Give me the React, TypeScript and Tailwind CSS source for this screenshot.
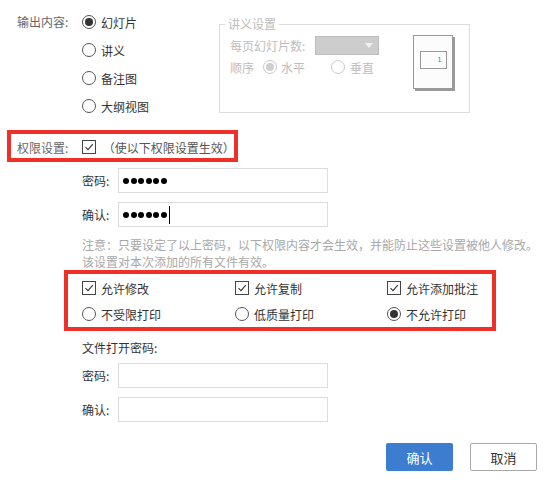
import React from 'react';

function Radio({ checked = false, disabled = false }: { checked?: boolean; disabled?: boolean }) {
  return (
    <span
      className={`flex h-[14px] w-[14px] shrink-0 items-center justify-center rounded-full border bg-white ${
        disabled ? 'border-[#c8c8c8]' : 'border-[#555]'
      }`}
    >
      {checked && (
        <span className={`h-[8px] w-[8px] rounded-full ${disabled ? 'bg-[#cfcfcf]' : 'bg-[#333]'}`} />
      )}
    </span>
  );
}

function Checkbox() {
  return (
    <span className="flex h-[14px] w-[14px] shrink-0 items-center justify-center border border-[#444] bg-white">
      <svg width="10" height="10" viewBox="0 0 10 10" fill="none">
        <path d="M1.5 5.2 L4 7.6 L8.8 2.2" stroke="#333" strokeWidth="1.1" />
      </svg>
    </span>
  );
}

function Dots() {
  return (
    <div className="flex items-center gap-[1.6px]">
      {[0, 1, 2, 3, 4, 5].map((i) => (
        <span key={i} className="h-[6px] w-[6px] rounded-full bg-black" />
      ))}
    </div>
  );
}

function PwdRow({ label, children }: { label: string; children?: React.ReactNode }) {
  return (
    <div className="flex items-center">
      <span className="w-[36px] text-[#333]">{label}</span>
      <div className="flex h-[25px] w-[210px] items-center border border-[#dcdcdc] bg-white pl-[4px]">
        {children}
      </div>
    </div>
  );
}

export default function App() {
  return (
    <div
      className="relative h-[484px] w-[548px] overflow-hidden bg-white text-[12px] leading-[17px] text-[#333]"
      style={{ fontFamily: '"Noto Sans CJK SC", "Noto Sans", sans-serif' }}
    >
      {/* 输出内容 + 讲义设置 */}
      <div className="flex pl-[17px] pt-[8px]">
        <div className="w-[65px] pt-[5px] text-[#666]">输出内容:</div>
        <div className="flex w-[137px] flex-col">
          {['幻灯片', '讲义', '备注图', '大纲视图'].map((t, i) => (
            <div key={t} className="flex h-[28px] items-center gap-[5px]">
              <Radio checked={i === 0} />
              <span>{t}</span>
            </div>
          ))}
        </div>
        <fieldset className="mt-[8px] box-border h-[97px] w-[251px] border border-[#dcdcdc] pl-[10px] pr-[16px] text-[#bdbdbd]">
          <legend className="ml-[-5px] h-[16px] px-[3px] leading-[16px]">讲义设置</legend>
          <div className="mt-[3px] flex">
            <div className="flex flex-col gap-[2px]">
              <div className="flex h-[20px] items-center">
                <span className="w-[85px]">每页幻灯片数:</span>
                <div className="flex h-[19px] w-[64px] items-center justify-end border border-[#bdbdbd] bg-[#cdcdcd] pr-[5px]">
                  <svg width="8" height="5" viewBox="0 0 8 5">
                    <path d="M0 0 H8 L4 5 Z" fill="#f2f2f2" />
                  </svg>
                </div>
              </div>
              <div className="flex h-[20px] items-center">
                <span className="w-[33px]">顺序</span>
                <Radio checked disabled />
                <span className="ml-[4px] w-[50px]">水平</span>
                <Radio disabled />
                <span className="ml-[5px]">垂直</span>
              </div>
            </div>
            <div className="ml-auto flex h-[54px] w-[40px] justify-center border border-[#999] bg-[#fcfcfc] pt-[15px] shadow-[2px_2px_0_#9a9a9a]">
              <div className="flex h-[18px] w-[27px] items-center justify-end border border-[#999] pr-[4px] font-['DejaVu_Sans_Mono',monospace] text-[7px] leading-none text-[#777]">
                1
              </div>
            </div>
          </div>
        </fieldset>
      </div>

      {/* 权限设置 */}
      <div className="ml-[7px] mt-[10px] flex h-[32px] w-[231px] items-center border-4 border-[#ef3029] pl-[6px] pt-[2px]">
        <span className="w-[65px] text-[#666]">权限设置:</span>
        <Checkbox />
        <span className="ml-[7px] text-[#555]">（使以下权限设置生效）</span>
      </div>

      <div className="mt-[6px] flex flex-col gap-[9px] pl-[82px]">
        <PwdRow label="密码:">
          <Dots />
        </PwdRow>
        <PwdRow label="确认:">
          <Dots />
          <span className="ml-[2px] h-[18px] w-px bg-black" />
        </PwdRow>
      </div>

      <div className="mt-[9px] pl-[82px] text-[#a8a8a8]">
        <div>注意：只要设定了以上密码，以下权限内容才会生效，并能防止这些设置被他人修改。</div>
        <div>该设置对本次添加的所有文件有效。</div>
      </div>

      {/* 权限选项 */}
      <div className="ml-[64px] w-[432px] border-4 border-[#ef3029] pl-[14px] pt-[1px]">
        <div className="grid h-[26px] grid-cols-[153px_152px_1fr] items-center">
          {['允许修改', '允许复制', '允许添加批注'].map((t) => (
            <div key={t} className="flex items-center gap-[5px]">
              <Checkbox />
              <span>{t}</span>
            </div>
          ))}
        </div>
        <div className="grid h-[26px] grid-cols-[153px_152px_1fr] items-center">
          {['不受限打印', '低质量打印', '不允许打印'].map((t, i) => (
            <div key={t} className="flex items-center gap-[5px]">
              <Radio checked={i === 2} />
              <span>{t}</span>
            </div>
          ))}
        </div>
      </div>

      {/* 文件打开密码 */}
      <div className="mt-[8px] pl-[82px]">文件打开密码:</div>
      <div className="mt-[7px] flex flex-col gap-[9px] pl-[82px]">
        <PwdRow label="密码:" />
        <PwdRow label="确认:" />
      </div>

      <div className="mt-[21px] flex justify-end gap-[17px] pr-[11px]">
        <button className="h-[28px] w-[67px] rounded-[2px] bg-[#3c7dcf] text-[13px] text-white">确认</button>
        <button className="h-[28px] w-[67px] rounded-[2px] border border-[#a8a8a8] bg-white text-[13px] text-[#333]">
          取消
        </button>
      </div>
    </div>
  );
}
